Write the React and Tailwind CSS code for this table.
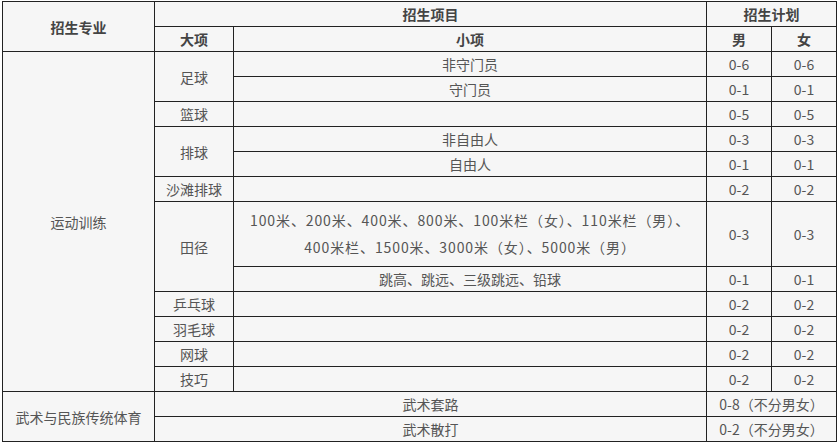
const rows = [
  { major: "运动训练", majorSpan: 12, big: "足球", bigSpan: 2, small: "非守门员", m: "0-6", f: "0-6" },
  { small: "守门员", m: "0-1", f: "0-1" },
  { big: "篮球", bigSpan: 1, small: "", m: "0-5", f: "0-5" },
  { big: "排球", bigSpan: 2, small: "非自由人", m: "0-3", f: "0-3" },
  { small: "自由人", m: "0-1", f: "0-1" },
  { big: "沙滩排球", bigSpan: 1, small: "", m: "0-2", f: "0-2" },
  {
    big: "田径",
    bigSpan: 2,
    small: "100米、200米、400米、800米、100米栏（女）、110米栏（男）、\n400米栏、1500米、3000米（女）、5000米（男）",
    tall: true,
    m: "0-3",
    f: "0-3",
  },
  { small: "跳高、跳远、三级跳远、铅球", m: "0-1", f: "0-1" },
  { big: "乒乓球", bigSpan: 1, small: "", m: "0-2", f: "0-2" },
  { big: "羽毛球", bigSpan: 1, small: "", m: "0-2", f: "0-2" },
  { big: "网球", bigSpan: 1, small: "", m: "0-2", f: "0-2" },
  { big: "技巧", bigSpan: 1, small: "", m: "0-2", f: "0-2" },
];

const cell = "border border-[#222] text-center align-middle p-0 leading-[24px]";

export default function App() {
  return (
    <div className="min-h-[445px] bg-white pl-[2px] pt-[1px]">
      <table
        className="w-[834px] table-fixed border-collapse bg-[#f6f6f6] text-[14px] text-[#555]"
        style={{ fontFamily: '"Noto Sans CJK SC", "Noto Sans", sans-serif' }}
      >
        <colgroup>
          <col className="w-[152px]" />
          <col className="w-[79px]" />
          <col className="w-[473px]" />
          <col className="w-[65px]" />
          <col className="w-[65px]" />
        </colgroup>
        <tbody>
          <tr className="h-[25px] font-bold text-[#444]">
            <td className={cell} rowSpan={2}>招生专业</td>
            <td className={cell} colSpan={2}>招生项目</td>
            <td className={cell} colSpan={2}>招生计划</td>
          </tr>
          <tr className="h-[25px] font-bold text-[#444]">
            <td className={cell}>大项</td>
            <td className={cell}>小项</td>
            <td className={cell}>男</td>
            <td className={cell}>女</td>
          </tr>

          {rows.map((row, i) => (
            <tr key={i} className={row.tall ? "h-[65px]" : "h-[25px]"}>
              {row.major && (
                <td className={cell} rowSpan={row.majorSpan}>{row.major}</td>
              )}
              {row.big && (
                <td className={cell} rowSpan={row.bigSpan}>{row.big}</td>
              )}
              <td
                className={
                  row.tall
                    ? `${cell} !leading-[27px] whitespace-pre-line tracking-[0.9px]`
                    : cell
                }
              >
                {row.small}
              </td>
              <td className={cell}>{row.m}</td>
              <td className={cell}>{row.f}</td>
            </tr>
          ))}

          <tr className="h-[25px]">
            <td className={cell} rowSpan={2}>武术与民族传统体育</td>
            <td className={cell} colSpan={2}>武术套路</td>
            <td className={cell} colSpan={2}>0-8（不分男女）</td>
          </tr>
          <tr className="h-[25px]">
            <td className={cell} colSpan={2}>武术散打</td>
            <td className={cell} colSpan={2}>0-2（不分男女）</td>
          </tr>
        </tbody>
      </table>
    </div>
  );
}
